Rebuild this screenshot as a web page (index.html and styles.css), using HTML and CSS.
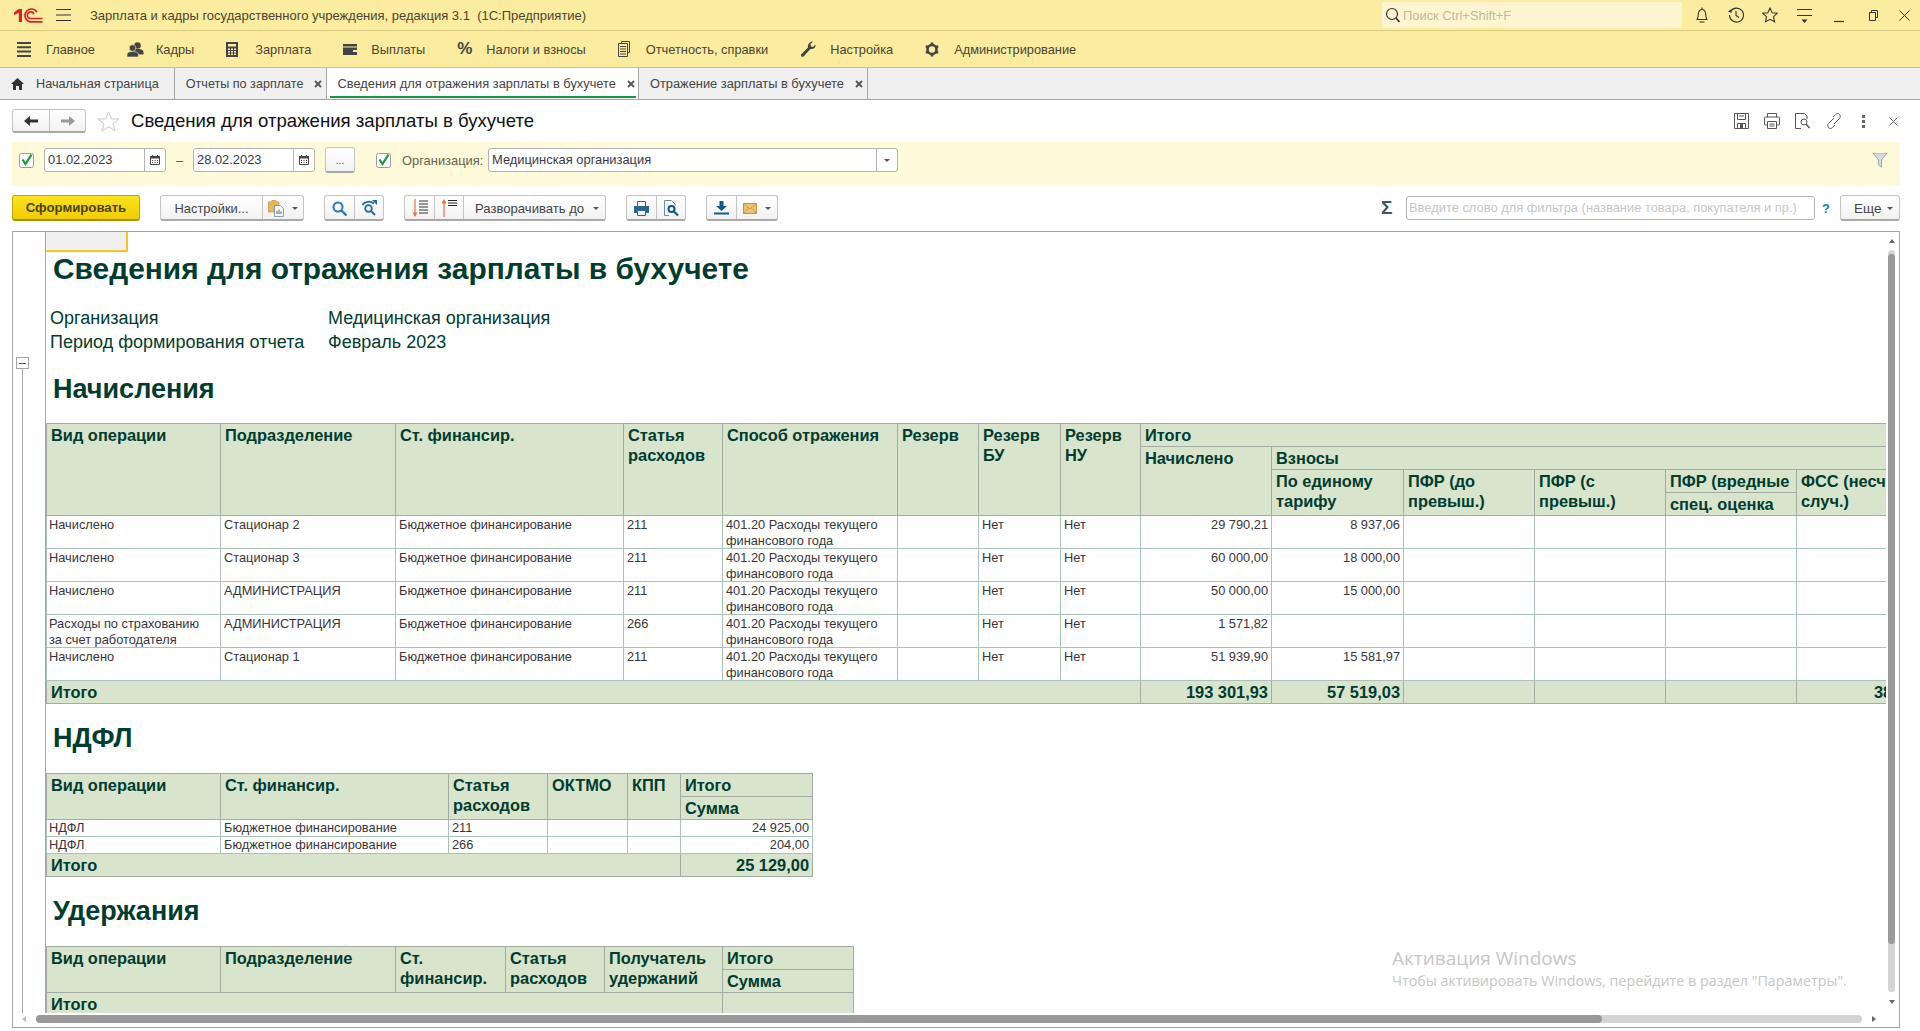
FILE: index.html
```html
<!DOCTYPE html>
<html lang="ru">
<head>
    <meta charset="UTF-8">
    <title>Сведения для отражения зарплаты в бухучете</title>
    <link rel="stylesheet" href="styles.css">
</head>
<body>
    <svg class="defs" width="0" height="0">
        <symbol id="cal" viewBox="0 0 12 12"><path d="M1.500 2.500h9v8h-9z" fill="none" stroke="#444"/><path d="M1 2h10v2.500H1zM3 1h1v2H3zM8 1h1v2H8z" fill="#444"/><path d="M3 6h1v1H3zM5.500 6h1v1h-1zM8 6h1v1H8zM3 8h1v1H3zM5.500 8h1v1h-1zM8 8h1v1H8z" fill="#444"/></symbol>
        <symbol id="tick" viewBox="0 0 15 15"><rect x=".5" y=".5" width="14" height="14" rx="2" fill="#fff" stroke="#9a9a9a"/><path d="M3.500 6.500 6.500 11 12.500 1.500" fill="none" stroke="#14993c" stroke-width="2.200"/></symbol>
    </svg>

    <header class="titlebar">
        <svg class="logo" width="30" height="15" viewBox="0 0 30 15"><path d="M1 4.500 5.500 1H9v13H5.800V4.800L1 7z" fill="#d8232a"/><path d="M24 4A6.500 6.500 0 1 0 17 13.800H29.500M20.800 6.200A3.300 3.300 0 1 0 17.500 10.500H29.500" fill="none" stroke="#d8232a" stroke-width="1.700"/></svg>
        <svg class="burger" width="15" height="12" viewBox="0 0 15 12"><path d="M0 .5h15M0 6h15M0 11.500h15" stroke="#333"/></svg>
        <span class="app-name">Зарплата и кадры государственного учреждения, редакция 3.1&nbsp; (1С:Предприятие)</span>
        <div class="app-search">
            <svg width="16" height="17" viewBox="0 0 16 17"><circle cx="7" cy="7" r="5.500" fill="none" stroke="#333" stroke-width="1.200"/><path d="m11 11 3.500 4" stroke="#333" stroke-width="1.800"/></svg>
            <span>Поиск Ctrl+Shift+F</span>
        </div>
        <div class="win-icons">
            <svg width="16" height="17" viewBox="0 0 16 17"><path d="M3 12.500c1.500-2 1-4 1.500-6.500C5 3.500 6.500 2.500 8 2.500s3 1 3.500 3.500c.5 2.500 0 4.500 1.500 6.500zM8 .5v2M5.500 15h5" fill="none" stroke="#333" stroke-width="1.100"/></svg>
            <svg width="16" height="16" viewBox="0 0 16 16"><path d="M2.500 4.500A7 7 0 1 1 1.500 8M8 4v4.500l3 2" fill="none" stroke="#333" stroke-width="1.100"/><path d="M0 4.500 3.500 2v4z" fill="#333"/></svg>
            <svg width="16" height="16" viewBox="0 0 16 16"><path d="m8 1 2.200 4.700 5 .6-3.700 3.400 1 5L8 12.300l-4.500 2.400 1-5L.8 6.300l5-.6z" fill="none" stroke="#333" stroke-width="1.100"/></svg>
            <svg width="15" height="15" viewBox="0 0 15 15"><path d="M0 1.500h15M0 7.500h15" stroke="#333"/><path d="M4.500 11.500h6L7.500 15z" fill="#333"/></svg>
            <svg width="10" height="15" viewBox="0 0 10 15"><path d="M0 13.500h10" stroke="#333" stroke-width="1.200"/></svg>
            <svg width="9" height="11" viewBox="0 0 9 11"><path d="M2.500 2.500V.5h6v7h-2M.5 2.500h6v8h-6z" fill="none" stroke="#333"/></svg>
            <svg width="11" height="11" viewBox="0 0 11 11"><path d="m.5.500 10 10m0-10-10 10" stroke="#333"/></svg>
        </div>
    </header>

    <nav class="sections">
        <a class="section"><svg width="14" height="15" viewBox="0 0 14 15"><path d="M0 1h14M0 5.300h14M0 9.600h14M0 14h14" stroke="#444" stroke-width="2"/></svg><span>Главное</span></a>
        <a class="section"><svg width="17" height="15" viewBox="0 0 17 15"><circle cx="10.500" cy="3.500" r="3.300" fill="#444"/><path d="M6 10c0-2.500 2-3 4.500-3s6 .5 6 3v2.500H13z" fill="#444"/><circle cx="5.500" cy="6" r="3.300" fill="#444" stroke="#fbeca0" stroke-width=".6"/><path d="M0 15v-2.500c0-2 2-3 5.500-3s6 1 6 3V15z" fill="#444" stroke="#fbeca0" stroke-width=".6"/></svg><span>Кадры</span></a>
        <a class="section"><svg width="12" height="15" viewBox="0 0 12 15"><path d="M0 0h12v15H0zM2 2v2.500h8V2zM2 6.500v1.500h2V6.500zM5 6.500v1.500h2V6.500zM8 6.500v1.500h2V6.500zM2 9v1.500h2V9zM5 9v1.500h2V9zM8 9v1.500h2V9zM2 11.500V13h2v-1.500zM5 11.500V13h2v-1.500zM8 11.500V13h2v-1.500z" fill="#444" fill-rule="evenodd"/></svg><span>Зарплата</span></a>
        <a class="section"><svg width="14" height="11" viewBox="0 0 14 11"><path d="M0 0h14v2.500H0zM0 3.500h14V11H0z" fill="#444"/><path d="M10 6h4v2h-4z" fill="#fbeca0"/></svg><span>Выплаты</span></a>
        <a class="section"><span class="percent">%</span><span>Налоги и взносы</span></a>
        <a class="section"><svg width="12" height="16" viewBox="0 0 12 16"><path d="M3.500 2.500V.5h8v11h-2M.5 2.500h9v13h-9zM2 5.500h6M2 8h6M2 10.500h6M2 13h6" fill="none" stroke="#444"/></svg><span>Отчетность, справки</span></a>
        <a class="section"><svg width="16" height="16" viewBox="0 0 16 16"><path d="M15.500 3.500c.5 2.500-1.500 5-5 4.500L3.500 15.500C2.500 16.500.5 15.500 1 13.500L8 6.500C7.500 3 10 .5 13 .5L10.500 3l.5 2.500 2 .5z" fill="#444"/></svg><span>Настройка</span></a>
        <a class="section"><svg width="14" height="15" viewBox="0 0 14 15"><circle cx="7" cy="7.500" r="4.500" fill="none" stroke="#444" stroke-width="2.600"/><path d="M7 .5v2.500M7 12v2.500M1 4l2 1.300M11 9.700 13 11M1 11l2-1.300M11 5.300 13 4" stroke="#444" stroke-width="2.600"/></svg><span>Администрирование</span></a>
    </nav>

    <div class="tabs">
        <div class="tab tab-home">
            <svg width="13" height="12" viewBox="0 0 13 12"><path d="M6.500 0 13 6h-2v6H8V8H5v4H2V6H0z" fill="#333"/></svg>
            <span>Начальная страница</span>
        </div>
        <div class="tab tab-narrow"><span>Отчеты по зарплате</span><svg class="tab-close" width="8" height="8" viewBox="0 0 8 8"><path d="m1 1 6 6m0-6-6 6" stroke="#555" stroke-width="1.800"/></svg></div>
        <div class="tab tab-active"><span>Сведения для отражения зарплаты в бухучете</span><svg class="tab-close" width="8" height="8" viewBox="0 0 8 8"><path d="m1 1 6 6m0-6-6 6" stroke="#555" stroke-width="1.800"/></svg></div>
        <div class="tab"><span>Отражение зарплаты в бухучете</span><svg class="tab-close" width="8" height="8" viewBox="0 0 8 8"><path d="m1 1 6 6m0-6-6 6" stroke="#555" stroke-width="1.800"/></svg></div>
    </div>

    <div class="form-head">
        <div class="btn-group">
            <span class="btn w36"><svg width="14" height="10" viewBox="0 0 14 10"><path d="M0 5 6 0v3.500h8v3H6V10z" fill="#333"/></svg></span>
            <span class="btn w36"><svg width="14" height="10" viewBox="0 0 14 10"><path d="M14 5 8 0v3.500H0v3h8V10z" fill="#999"/></svg></span>
        </div>
        <svg class="fav" width="23" height="21" viewBox="0 0 23 21"><path d="m11.500 1 3 7h7.500l-6 4.700 2.200 7.300-6.700-4.300L4.800 20 7 12.700 1 8h7.500z" fill="#fff" stroke="#c9c9c9"/></svg>
        <h1 class="form-title">Сведения для отражения зарплаты в бухучете</h1>
        <div class="form-icons">
            <svg width="15" height="16" viewBox="0 0 15 16"><path d="M.5.500h14v15H.5zM3.500.5v6h8v-6M5 3h5M3.500 15.500v-5h8v5" fill="none" stroke="#555"/><path d="M6 11h3v4H6z" fill="#555"/></svg>
            <svg width="16" height="16" viewBox="0 0 16 16"><path d="M3.500 4V.5h9V4M3 12H1.500a1 1 0 0 1-1-1V5a1 1 0 0 1 1-1h13a1 1 0 0 1 1 1v6a1 1 0 0 1-1 1H13M3.500 8.500h9v7h-9zM5.500 11h5M5.500 13h5" fill="none" stroke="#555"/></svg>
            <svg width="16" height="16" viewBox="0 0 16 16"><path d="M6 15.500H.5V.5h9L12 3v3" fill="none" stroke="#555"/><circle cx="9" cy="9" r="3" fill="none" stroke="#555"/><path d="m11 11 3.500 4" stroke="#555" stroke-width="1.500"/></svg>
            <svg width="16" height="16" viewBox="0 0 16 16"><path d="M7 4 9.500 1.500a2.500 2.500 0 0 1 4 0c1 1 1 3 0 4L8 11M9 12l-2.500 2.500a2.500 2.500 0 0 1-4 0c-1-1-1-3 0-4L8 5" fill="none" stroke="#555"/></svg>
            <svg class="dots" width="3" height="13" viewBox="0 0 3 13"><path d="M0 0h3v3H0zM0 5h3v3H0zM0 10h3v3H0z" fill="#666"/></svg>
            <svg width="9" height="9" viewBox="0 0 9 9"><path d="m.5.500 8 8m0-8-8 8" stroke="#666"/></svg>
        </div>
    </div>

    <div class="filters">
        <svg class="check" width="15" height="15"><use href="#tick"/></svg>
        <div class="field date"><span class="field-text">01.02.2023</span><span class="field-btn"><svg width="12" height="12"><use href="#cal"/></svg></span></div>
        <span class="dash">–</span>
        <div class="field date"><span class="field-text">28.02.2023</span><span class="field-btn"><svg width="12" height="12"><use href="#cal"/></svg></span></div>
        <span class="btn-group pick"><span class="btn">...</span></span>
        <svg class="check check-org" width="15" height="15"><use href="#tick"/></svg>
        <label class="org-label">Организация:</label>
        <div class="field org"><span class="field-text">Медицинская организация</span><span class="field-btn"><i class="caret"></i></span></div>
        <svg class="funnel" width="14" height="15" viewBox="0 0 14 15"><path d="M0 0h14L8.500 7v7l-3-2V7z" fill="#d8dde0" stroke="#8a9aa4" stroke-width=".8"/></svg>
    </div>

    <div class="toolbar">
        <button class="primary">Сформировать</button>
        <div class="btn-group">
            <span class="btn w101">Настройки...</span>
            <span class="btn w41">
                <svg width="16" height="18" viewBox="0 0 16 18"><path d="M0 3h3l1-1.500h4L9 3h2v10H0z" fill="#e9b557" stroke="#b98a3a" stroke-width=".6"/><path d="M6.500 6.500h6l3 3v8h-9z" fill="#f4f7f8" stroke="#6a8aa0" stroke-width=".8"/><path d="M8.500 12h1v3h-1z" fill="#c33"/><path d="M10.500 10.500h1V15h-1z" fill="#393"/><path d="M12.500 12.500h1V15h-1z" fill="#36a"/></svg>
                <i class="caret"></i>
            </span>
        </div>
        <div class="btn-group">
            <span class="btn w29"><svg width="15" height="15" viewBox="0 0 15 15"><circle cx="6" cy="6" r="4.500" fill="none" stroke="#2a7ab0" stroke-width="2"/><path d="m9.500 9.500 5 5" stroke="#2a7ab0" stroke-width="2.400"/></svg></span>
            <span class="btn w29"><svg width="15" height="16" viewBox="0 0 15 16"><path d="M.5 5C2.500 1.500 7.500.5 12 3.500" fill="none" stroke="#1f6d9e" stroke-width="1.800"/><path d="M10 0h5v5z" fill="#1f6d9e"/><circle cx="6.500" cy="8.500" r="3.300" fill="none" stroke="#1f6d9e" stroke-width="1.800"/><path d="m9 11 4 4" stroke="#1f6d9e" stroke-width="2"/></svg></span>
        </div>
        <div class="btn-group">
            <span class="btn w29"><svg width="16" height="18" viewBox="0 0 16 18"><path d="M3 0v15" stroke="#e8743c" stroke-width="1.200"/><path d="M.5 13.500h5L3 18z" fill="#e8743c"/><path d="M7 2h9M7 5h9M7 8h9M7 11h9M7 14h9" stroke="#333"/></svg></span>
            <span class="btn w29"><svg width="16" height="18" viewBox="0 0 16 18"><path d="M3 3v15" stroke="#e8743c" stroke-width="1.200"/><path d="M.5 4.500h5L3 0z" fill="#e8743c"/><path d="M7 1.500h9M7 4h9M7 6.500h9" stroke="#222"/></svg></span>
            <span class="btn w142 btn-menu">Разворачивать до<i class="caret"></i></span>
        </div>
        <div class="btn-group">
            <span class="btn w29"><svg width="15" height="15" viewBox="0 0 15 15"><path d="M3.500 5V.5h8V5" fill="none" stroke="#27668f"/><path d="M0 5h15v7h-3V9H3v3H0z" fill="#27668f"/><path d="M3.500 9.500h8v5h-8z" fill="none" stroke="#27668f"/></svg></span>
            <span class="btn w29"><svg width="15" height="16" viewBox="0 0 15 16"><path d="M5 15.500H.5V.5h7L11 4v2" fill="none" stroke="#6f8ea3"/><circle cx="7.500" cy="9" r="3" fill="none" stroke="#0e5a8a" stroke-width="2"/><path d="m10 11.500 4 4" stroke="#0e5a8a" stroke-width="2.200"/></svg></span>
        </div>
        <div class="btn-group">
            <span class="btn w29"><svg width="15" height="14" viewBox="0 0 15 14"><path d="M5.500 0h4v5H13L7.500 10 2 5h3.500z" fill="#0e5a8a"/><path d="M0 12.500h15" stroke="#0e5a8a" stroke-width="2"/></svg></span>
            <span class="btn w41"><svg width="14" height="11" viewBox="0 0 14 11"><path d="M.5.500h13v10H.5z" fill="#efc27a" stroke="#cc8f35"/><path d="m.5.500 6.500 5.500L13.500.5M.5 10.500 5.500 5M13.500 10.500l-5-5.500" fill="none" stroke="#cc8f35" stroke-width=".8"/></svg><i class="caret"></i></span>
        </div>
        <div class="toolbar-right">
            <span class="sigma">Σ</span>
            <div class="filter-word">Введите слово для фильтра (название товара, покупателя и пр.)</div>
            <span class="help">?</span>
            <div class="btn-group"><span class="btn w58 btn-more">Еще<i class="caret"></i></span></div>
        </div>
    </div>

    <div class="report">
        <div class="gutter">
            <span class="group-box"></span>
            <span class="group-line"></span>
        </div>
        <div class="sheet">
            <div class="corner"></div>
            <div class="rep-title">Сведения для отражения зарплаты в бухучете</div>
            <div class="rep-params">
                <span>Организация</span><span>Медицинская организация</span>
                <span>Период формирования отчета</span><span>Февраль 2023</span>
            </div>

            <h2 class="rep-section first">Начисления</h2>
            <table class="grid t-charges">
                <colgroup>
                    <col class="c174"><col class="c175"><col class="c228"><col class="c99"><col class="c175"><col class="c81"><col class="c82"><col class="c80"><col class="c131"><col class="c132"><col class="c131"><col class="c131"><col class="c131"><col class="c131">
                </colgroup>
                <thead>
                    <tr>
                        <th rowspan="4">Вид операции</th>
                        <th rowspan="4">Подразделение</th>
                        <th rowspan="4">Ст. финансир.</th>
                        <th rowspan="4">Статья расходов</th>
                        <th rowspan="4">Способ отражения</th>
                        <th rowspan="4">Резерв</th>
                        <th rowspan="4">Резерв БУ</th>
                        <th rowspan="4">Резерв НУ</th>
                        <th colspan="6">Итого</th>
                    </tr>
                    <tr>
                        <th rowspan="3">Начислено</th>
                        <th colspan="5">Взносы</th>
                    </tr>
                    <tr>
                        <th rowspan="2">По единому тарифу</th>
                        <th rowspan="2">ПФР (до превыш.)</th>
                        <th rowspan="2">ПФР (с превыш.)</th>
                        <th class="nowrap">ПФР (вредные</th>
                        <th rowspan="2"><div class="nowrap">ФСС (несч.</div>случ.)</th>
                    </tr>
                    <tr><th class="nowrap">спец. оценка</th></tr>
                </thead>
                <tbody>
                    <tr><td>Начислено</td><td>Стационар 2</td><td>Бюджетное финансирование</td><td>211</td><td>401.20 Расходы текущего финансового года</td><td></td><td>Нет</td><td>Нет</td><td class="num">29 790,21</td><td class="num">8 937,06</td><td></td><td></td><td></td><td></td></tr>
                    <tr><td>Начислено</td><td>Стационар 3</td><td>Бюджетное финансирование</td><td>211</td><td>401.20 Расходы текущего финансового года</td><td></td><td>Нет</td><td>Нет</td><td class="num">60 000,00</td><td class="num">18 000,00</td><td></td><td></td><td></td><td></td></tr>
                    <tr><td>Начислено</td><td>АДМИНИСТРАЦИЯ</td><td>Бюджетное финансирование</td><td>211</td><td>401.20 Расходы текущего финансового года</td><td></td><td>Нет</td><td>Нет</td><td class="num">50 000,00</td><td class="num">15 000,00</td><td></td><td></td><td></td><td></td></tr>
                    <tr><td>Расходы по страхованию за счет работодателя</td><td>АДМИНИСТРАЦИЯ</td><td>Бюджетное финансирование</td><td>266</td><td>401.20 Расходы текущего финансового года</td><td></td><td>Нет</td><td>Нет</td><td class="num">1 571,82</td><td></td><td></td><td></td><td></td><td></td></tr>
                    <tr><td>Начислено</td><td>Стационар 1</td><td>Бюджетное финансирование</td><td>211</td><td>401.20 Расходы текущего финансового года</td><td></td><td>Нет</td><td>Нет</td><td class="num">51 939,90</td><td class="num">15 581,97</td><td></td><td></td><td></td><td></td></tr>
                </tbody>
                <tfoot>
                    <tr><th colspan="8">Итого</th><th class="num">193 301,93</th><th class="num">57 519,03</th><th></th><th></th><th></th><th class="num">386,60</th></tr>
                </tfoot>
            </table>

            <h2 class="rep-section">НДФЛ</h2>
            <table class="grid t-ndfl">
                <colgroup>
                    <col class="c174"><col class="c228"><col class="c99"><col class="c80"><col class="c53"><col class="c132">
                </colgroup>
                <thead>
                    <tr><th rowspan="2">Вид операции</th><th rowspan="2">Ст. финансир.</th><th rowspan="2">Статья расходов</th><th rowspan="2">ОКТМО</th><th rowspan="2">КПП</th><th>Итого</th></tr>
                    <tr><th>Сумма</th></tr>
                </thead>
                <tbody>
                    <tr class="row-short"><td>НДФЛ</td><td>Бюджетное финансирование</td><td>211</td><td></td><td></td><td class="num">24 925,00</td></tr>
                    <tr class="row-short"><td>НДФЛ</td><td>Бюджетное финансирование</td><td>266</td><td></td><td></td><td class="num">204,00</td></tr>
                </tbody>
                <tfoot>
                    <tr><th colspan="5">Итого</th><th class="num">25 129,00</th></tr>
                </tfoot>
            </table>

            <h2 class="rep-section">Удержания</h2>
            <table class="grid t-hold">
                <colgroup>
                    <col class="c174"><col class="c175"><col class="c110"><col class="c99"><col class="c118"><col class="c131">
                </colgroup>
                <thead>
                    <tr><th rowspan="2">Вид операции</th><th rowspan="2">Подразделение</th><th rowspan="2">Ст. финансир.</th><th rowspan="2">Статья расходов</th><th rowspan="2">Получатель удержаний</th><th>Итого</th></tr>
                    <tr><th>Сумма</th></tr>
                </thead>
                <tfoot>
                    <tr><th colspan="5">Итого</th><th></th></tr>
                </tfoot>
            </table>
        </div>
        <div class="vscroll">
            <i class="arrow-up"></i>
            <div class="v-track"><div class="v-thumb"></div></div>
            <i class="arrow-down"></i>
        </div>
        <div class="hscroll">
            <i class="arrow-left"></i>
            <div class="h-track"><div class="h-thumb"></div></div>
            <i class="arrow-right"></i>
        </div>
        <div class="watermark">
            <div class="wm-title">Активация Windows</div>
            <div class="wm-text">Чтобы активировать Windows, перейдите в раздел "Параметры".</div>
        </div>
    </div>
</body>
</html>
```

FILE: styles.css
```css
* {
    box-sizing: border-box;
}

html, body {
    margin: 0;
    padding: 0;
    height: 100%;
}

body {
    width: 1920px;
    height: 1031px;
    overflow: hidden;
    display: flex;
    flex-direction: column;
    background: #fff;
    color: #333;
    font-family: "Liberation Sans", Arial, sans-serif;
    font-size: 12.9px;
}

.defs {
    position: absolute;
}

svg {
    display: block;
    flex: none;
}

/* top bars */
.titlebar {
    height: 31px;
    flex: none;
    display: flex;
    align-items: center;
    padding-left: 13px;
    background: #fbeca0;
    border-bottom: 1px solid #d8c87c;
}
.burger {
    margin-left: 13px;
}
.app-name {
    margin-left: 19px;
    font-size: 13px;
    color: #4a4536;
}
.app-search {
    margin-left: auto;
    width: 300px;
    height: 26px;
    display: flex;
    align-items: center;
    gap: 2px;
    padding-left: 3px;
    background: #fdf5cf;
    border-radius: 2px;
    color: #bdb9a6;
}
.win-icons {
    width: 238px;
    display: flex;
    align-items: center;
    gap: 18px;
    padding-left: 12px;
}
.win-icons svg:nth-child(4) {
    margin-left: 1px;
}
.win-icons svg:nth-child(5) {
    margin-left: 4px;
}
.win-icons svg:nth-child(6) {
    margin-left: 7px;
}
.win-icons svg:nth-child(7) {
    margin-left: 3px;
}

.sections {
    height: 37px;
    flex: none;
    display: flex;
    align-items: center;
    gap: 32px;
    padding-left: 17px;
    background: #fbeca0;
    border-bottom: 1px solid #cfc189;
    color: #4a4536;
    font-size: 12.8px;
}
.section {
    display: flex;
    align-items: center;
}
.section:nth-child(1) svg { margin-right: 15px; }
.section:nth-child(2) svg { margin-right: 12px; }
.section:nth-child(3) svg { margin-right: 17px; }
.section:nth-child(4) svg { margin-right: 14px; }
.section:nth-child(6) svg { margin-right: 16px; }
.section:nth-child(7) svg { margin-right: 14px; }
.section:nth-child(8) svg { margin-right: 15px; }
.percent {
    font-size: 17px;
    font-weight: bold;
    color: #444;
    width: 29px;
}

.tabs {
    height: 32px;
    flex: none;
    display: flex;
    background: #f0f0f0;
    border-bottom: 1px solid #a6a6a6;
    color: #444;
    font-size: 12.85px;
}
.tab {
    display: flex;
    align-items: center;
    gap: 11px;
    padding: 0 4px 0 11px;
    border-right: 1px solid #a6a6a6;
}
.tab-home {
    padding-left: 11px;
    padding-right: 15px;
    gap: 12px;
    font-size: 12.7px;
}
.tab-narrow {
    font-size: 12.6px;
}
.tab-active {
    padding: 0 3px 0 10px;
    background: #fff;
    position: relative;
}
.tab-active::after {
    content: "";
    position: absolute;
    left: 3px;
    right: 2px;
    bottom: 1px;
    height: 2px;
    background: #129a44;
}

/* form head */
.form-head {
    height: 42px;
    flex: none;
    display: flex;
    align-items: center;
    padding: 0 22px 0 12px;
}
.form-head .btn-group {
    height: 24px;
}
.fav {
    margin-left: 11px;
}
.form-title {
    margin: 0 0 0 11px;
    font-size: 18.6px;
    font-weight: normal;
    color: #111;
}
.form-icons {
    margin-left: auto;
    display: flex;
    align-items: center;
    gap: 15px;
}
.form-icons .dots {
    margin: 0 9px 0 5px;
}

/* buttons */
.btn-group {
    display: flex;
    height: 26px;
    border: 1px solid #c4c4c4;
    border-bottom: 2px solid #a8a8a8;
    border-radius: 3px;
    background: linear-gradient(#fff, #f2f2f2);
}
.btn {
    display: flex;
    align-items: center;
    justify-content: center;
    gap: 8px;
    height: 100%;
    padding-top: 1px;
    border-left: 1px solid #c4c4c4;
    color: #444;
}
.btn:first-child {
    border-left: 0;
}
.btn-menu {
    justify-content: flex-start;
    gap: 9px;
    padding-left: 11px;
    font-size: 13.1px;
}
.btn-more {
    justify-content: flex-start;
    gap: 6px;
    padding-left: 13px;
    font-size: 13.5px;
}
.w29 { width: 29px; }
.w36 { width: 36px; }
.w41 { width: 41px; }
.w58 { width: 58px; }
.w101 { width: 101px; }
.w142 { width: 142px; }

.caret {
    display: inline-block;
    width: 0;
    height: 0;
    border-left: 3px solid transparent;
    border-right: 3px solid transparent;
    border-top: 3px solid #555;
}

/* filter panel */
.filters {
    height: 44px;
    flex: none;
    display: flex;
    align-items: center;
    margin: 0 20px 0 12px;
    padding: 0 13px 8px 7px;
    background: #fef9d9;
}
.field {
    height: 24px;
    display: flex;
    background: #fff;
    border: 1px solid #b4b4b4;
    border-radius: 3px;
}
.field-text {
    flex: 1;
    padding-left: 3px;
    line-height: 22px;
    color: #3a3a44;
}
.field-btn {
    display: flex;
    align-items: center;
    justify-content: center;
    border-left: 1px solid #b4b4b4;
    width: 21px;
}
.date {
    width: 122px;
    margin-left: 10px;
}
.dash {
    width: 27px;
    margin-right: -10px;
    padding-left: 10px;
    color: #555;
}
.pick {
    margin-left: 10px;
    width: 30px;
}
.pick .btn {
    width: 100%;
    font-size: 10px;
}
.check-org {
    margin-left: 21px;
}
.org-label {
    margin-left: 11px;
    width: 86px;
    color: #6a6350;
}
.org {
    width: 410px;
}
.funnel {
    margin-left: auto;
}

/* toolbar */
.toolbar {
    flex: none;
    display: flex;
    align-items: center;
    gap: 20px;
    margin: 9px 20px 0 12px;
}
.primary {
    width: 128px;
    height: 26px;
    padding: 0;
    font: bold 13.2px "Liberation Sans", Arial, sans-serif;
    color: #4a4000;
    background: linear-gradient(#fbe21c, #f0cd00);
    border: 1px solid #c6a800;
    border-bottom: 2px solid #a89000;
    border-radius: 3px;
}
.toolbar-right {
    margin-left: auto;
    display: flex;
    align-items: center;
}
.sigma {
    width: 25px;
    font-size: 19px;
    font-weight: bold;
    color: #3d5464;
}
.filter-word {
    width: 409px;
    height: 24px;
    line-height: 22px;
    padding-left: 2px;
    border: 1px solid #b4b4b4;
    border-radius: 3px;
    color: #c8c4cc;
}
.help {
    width: 25px;
    padding-left: 7px;
    font-weight: bold;
    color: #1a78c2;
}

/* report */
.report {
    position: relative;
    flex: none;
    height: 797px;
    margin: 10px 20px 0 12px;
    display: grid;
    grid-template-columns: 32px 1fr 13px;
    grid-template-rows: 1fr 14px;
    border: 1px solid #a6a6a6;
    overflow: hidden;
}
.gutter {
    display: flex;
    flex-direction: column;
    align-items: center;
    padding: 125px 13px 0 0;
}
.group-box {
    width: 13px;
    height: 12px;
    flex: none;
    border: 1px solid #a6a6a6;
    background: linear-gradient(#555, #555) center / 7px 1px no-repeat;
}
.group-line {
    flex: 1;
    width: 1px;
    background: #a6a6a6;
}
.sheet {
    min-width: 0;
    overflow: hidden;
    border-left: 1px solid #a6a6a6;
    color: #003c30;
}
.corner {
    width: 82px;
    height: 20px;
    background: #f0f0f0;
    border-right: 2px solid #f7c520;
    border-bottom: 2px solid #f7c520;
}
.rep-title {
    height: 34px;
    line-height: 34px;
    padding-left: 7px;
    font-size: 29.9px;
    font-weight: bold;
}
.rep-params {
    display: grid;
    grid-template-columns: 278px 1fr;
    margin-top: 20px;
    padding-left: 4px;
    font-size: 18px;
    line-height: 24px;
}
.rep-section {
    height: 34px;
    margin: 17px 0 18px;
    padding-left: 7px;
    font-size: 27px;
    line-height: 34px;
}
.rep-section.first {
    margin: 18px 0 17px;
}

.grid {
    border-collapse: collapse;
    table-layout: fixed;
    font-size: 12.8px;
}
.t-charges { width: 1881px; }
.t-ndfl { width: 766px; }
.t-hold { width: 807px; }
.c53 { width: 53px; }
.c80 { width: 80px; }
.c81 { width: 81px; }
.c82 { width: 82px; }
.c99 { width: 99px; }
.c110 { width: 110px; }
.c118 { width: 118px; }
.c131 { width: 131px; }
.c132 { width: 132px; }
.c174 { width: 174px; }
.c175 { width: 175px; }
.c228 { width: 228px; }

.grid th {
    height: 23px;
    padding: 1px 4px 0;
    background: #d8e4cc;
    border: 1px solid #a3aca3;
    vertical-align: top;
    text-align: left;
    font-size: 16.4px;
    line-height: 20px;
    overflow: hidden;
}
.grid td {
    height: 32px;
    padding: 1px 5px 0 3px;
    border: 1px solid #a9c3ba;
    vertical-align: top;
    line-height: 15.5px;
    color: #3a3438;
    overflow: hidden;
}
.grid td:first-child {
    padding-left: 2px;
}
.row-short td {
    height: 17px;
    padding-top: 0;
    line-height: 16px;
}
.grid .num {
    text-align: right;
    padding-right: 3px;
}
.nowrap {
    white-space: nowrap;
}

/* scrollbars */
.vscroll {
    display: flex;
    flex-direction: column;
    align-items: center;
    padding: 7px 2px 9px 0;
}
.v-track {
    flex: 1;
    width: 7px;
    margin: 7px 0 8px;
    background: #d4d4d4;
    border-radius: 4px;
}
.v-thumb {
    height: 690px;
    margin-top: 4px;
    background: #999;
    border-radius: 4px;
}
.hscroll {
    grid-column: 1 / 4;
    display: flex;
    align-items: center;
    padding: 0 0 2px 9px;
}
.h-track {
    width: 1826px;
    height: 8px;
    margin: 0 0 0 10px;
    background: #d4d4d4;
    border-radius: 4px;
}
.h-thumb {
    width: 1566px;
    height: 8px;
    background: #999;
    border-radius: 4px;
}
.arrow-up, .arrow-down {
    width: 0;
    height: 0;
    border-left: 3px solid transparent;
    border-right: 3px solid transparent;
}
.arrow-up { border-bottom: 4px solid #666; }
.arrow-down { border-top: 4px solid #666; }
.arrow-left, .arrow-right {
    width: 0;
    height: 0;
    border-top: 3px solid transparent;
    border-bottom: 3px solid transparent;
}
.arrow-left { border-right: 4px solid #bbb; }
.arrow-right { border-left: 4px solid #666; margin-left: 10px; }

.watermark {
    position: absolute;
    left: 1379px;
    top: 713px;
    font-family: "Open Sans", sans-serif;
    color: #c6c6c6;
    pointer-events: none;
}
.wm-title {
    font-size: 19px;
    line-height: 26px;
}
.wm-text {
    margin-top: 1px;
    font-size: 14.3px;
    line-height: 18px;
}
```
